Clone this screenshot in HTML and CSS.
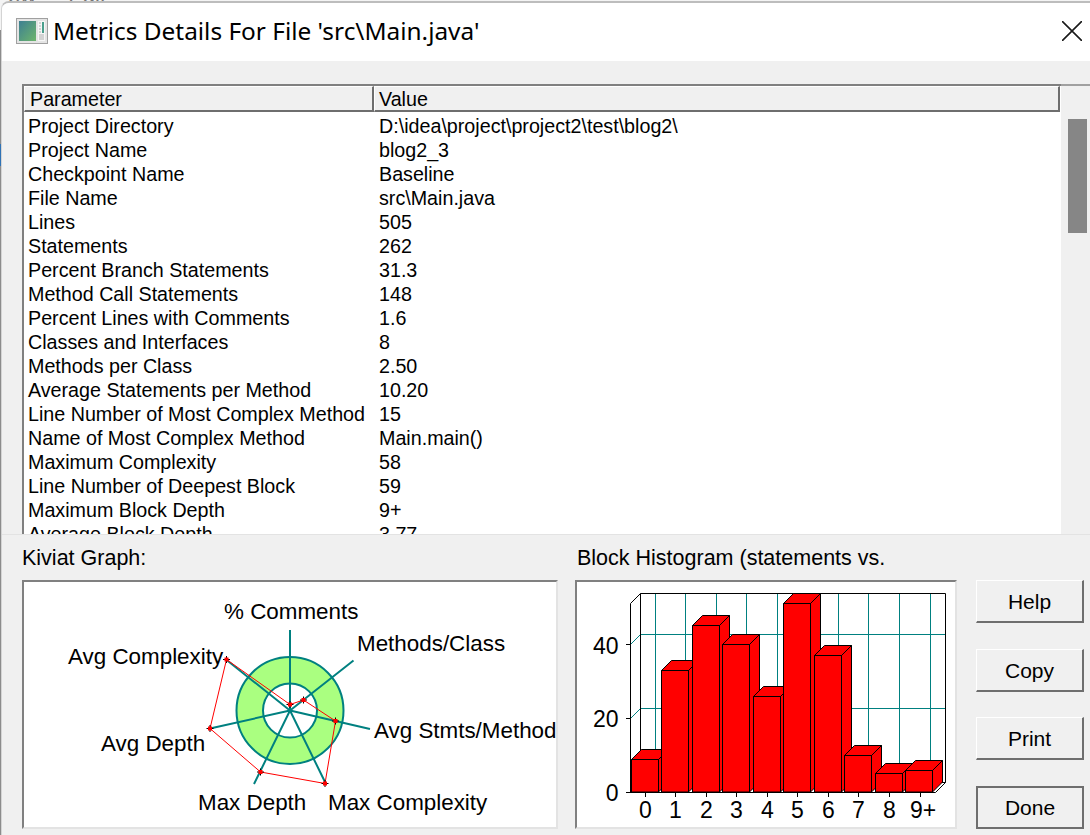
FILE: index.html
```html
<!DOCTYPE html>
<html lang="en">

<head>
    <meta charset="UTF-8">
    <title>Metrics Details</title>
    <link rel="stylesheet" href="styles.css">
</head>

<body>

    <div class="behind"><span>ew</span><span>Edit</span></div>
    <div class="behind-edge"><div class="behind-accent"></div></div>

    <div class="window">

        <!-- Title bar -->
        <div class="titlebar">
            <svg class="app-icon" width="32" height="26" viewBox="0 0 32 26">
                <defs>
                    <linearGradient id="panel" x1="0" y1="0" x2="1" y2="1">
                        <stop offset="0" stop-color="#3d7f92"/>
                        <stop offset="1" stop-color="#6db56c"/>
                    </linearGradient>
                </defs>
                <rect x="0.5" y="0.5" width="31" height="25" fill="#e4e4e4" stroke="#a0a0a0"/>
                <rect x="3" y="3" width="17" height="20" fill="url(#panel)"/>
                <rect x="22" y="3" width="7" height="20" fill="#f6f6f6"/>
                <rect x="26" y="4" width="2" height="11" fill="#4a9f8c"/>
                <path d="M23 5h2M23 8h2M23 11h2M23 14h2M23 17h5M23 19h5M23 21h5" stroke="#b0b0b0"/>
            </svg>
            <div class="title">Metrics Details For File 'src\Main.java'</div>
            <svg class="close" width="20" height="20" viewBox="0 0 20 20">
                <path d="M0 0L20 20M20 0L0 20" stroke="#1a1a1a" stroke-width="1.6" fill="none"/>
            </svg>
        </div>

        <!-- Parameter list -->
        <div class="details">
            <div class="list">
                <div class="list-header">
                    <div class="head-cell head-param">Parameter</div>
                    <div class="head-cell head-value">Value</div>
                </div>
                <div class="rows">
                    <div class="row"><span class="param">Project Directory</span><span>D:\idea\project\project2\test\blog2\</span></div>
                    <div class="row"><span class="param">Project Name</span><span>blog2_3</span></div>
                    <div class="row"><span class="param">Checkpoint Name</span><span>Baseline</span></div>
                    <div class="row"><span class="param">File Name</span><span>src\Main.java</span></div>
                    <div class="row"><span class="param">Lines</span><span>505</span></div>
                    <div class="row"><span class="param">Statements</span><span>262</span></div>
                    <div class="row"><span class="param">Percent Branch Statements</span><span>31.3</span></div>
                    <div class="row"><span class="param">Method Call Statements</span><span>148</span></div>
                    <div class="row"><span class="param">Percent Lines with Comments</span><span>1.6</span></div>
                    <div class="row"><span class="param">Classes and Interfaces</span><span>8</span></div>
                    <div class="row"><span class="param">Methods per Class</span><span>2.50</span></div>
                    <div class="row"><span class="param">Average Statements per Method</span><span>10.20</span></div>
                    <div class="row"><span class="param">Line Number of Most Complex Method</span><span>15</span></div>
                    <div class="row"><span class="param">Name of Most Complex Method</span><span>Main.main()</span></div>
                    <div class="row"><span class="param">Maximum Complexity</span><span>58</span></div>
                    <div class="row"><span class="param">Line Number of Deepest Block</span><span>59</span></div>
                    <div class="row"><span class="param">Maximum Block Depth</span><span>9+</span></div>
                    <div class="row"><span class="param">Average Block Depth</span><span>3.77</span></div>
                </div>
            </div>
            <div class="scrollbar">
                <div class="thumb"></div>
            </div>
        </div>

        <!-- Graphs and buttons -->
        <div class="lower">
            <div class="kiviat-col">
                <div class="graph-label">Kiviat Graph:</div>
                <div class="graph-box">
                    <svg class="graph" viewBox="24 582 532 245">
                        <circle cx="290" cy="710.5" r="53.5" fill="#aaff80" stroke="#008080" stroke-width="2"/>
                        <circle cx="290" cy="710.5" r="27" fill="#fff" stroke="#008080" stroke-width="2"/>
                        <path class="spoke" d="M290 710.5V630M290 710.5L353.5 660.5M290 710.5L370 729M290 710.5L326 784M290 710.5L254 784M290 710.5L210 728.5M290 710.5L226 659.5"/>
                        <polygon class="outline" points="290,704.5 303.5,700 335.5,721 325,783.5 260.5,772 210,728.5 226.5,659.5"/>
                        <path class="marks" d="M286.5 704.5h7M290 701v7M300 700h7M303.5 696.5v7M332 721h7M335.5 717.5v7M321.5 783.5h7M325 780v7M257 772h7M260.5 768.5v7M206.5 728.5h7M210 725v7M223 659.5h7M226.5 656v7"/>
                        <path class="marks-red" d="M290 704.5h.01M303.5 700h.01M335.5 721h.01M325 783.5h.01M260.5 772h.01M210 728.5h.01M226.5 659.5h.01"/>
                        <text x="224" y="619">% Comments</text>
                        <text x="357" y="651">Methods/Class</text>
                        <text x="374" y="738">Avg Stmts/Method</text>
                        <text x="328" y="810">Max Complexity</text>
                        <text x="198" y="810">Max Depth</text>
                        <text x="101" y="751">Avg Depth</text>
                        <text x="68" y="664">Avg Complexity</text>
                    </svg>
                </div>
            </div>

            <div class="hist-col">
                <div class="graph-label hist-label">Block Histogram (statements vs.</div>
                <div class="graph-box">
                    <svg class="graph" viewBox="577 582 378 245">
                        <clipPath id="plot"><rect x="577" y="593" width="378" height="234"/></clipPath>

                        <!-- back wall grid -->
                        <path class="grid" d="M655.5 593V782M685.5 593V782M716.5 593V782M746.5 593V782M777.5 593V782M807.5 593V782M838.5 593V782M868.5 593V782M899.5 593V782M930.5 593V782"/>
                        <path class="grid" d="M630.5 644.5L640.5 634.5H945.5M630.5 718.5L640.5 708.5H945.5"/>
                        <path class="frame" d="M630.5 792V603.5L640.5 593.5H945.5V782.5L935.5 792.5H626M640.5 593.5V782.5H945.5"/>
                        <path class="frame" d="M626 644.5H630.5M626 718.5H630.5M645.5 792V797M675.5 792V797M706.5 792V797M736.5 792V797M767.5 792V797M797.5 792V797M828.5 792V797M858.5 792V797M889.5 792V797M920.5 792V797"/>

                        <!-- bars -->
                        <g class="bars" clip-path="url(#plot)">
                            <path d="M631.5 759.5h27v32.5h-27zM631.5 759.5l10 -10h27l-10 10zM658.5 759.5l10 -10v32.5l-10 10z"/>
                            <path d="M661.5 670.5h27v121.5h-27zM661.5 670.5l10 -10h27l-10 10zM688.5 670.5l10 -10v121.5l-10 10z"/>
                            <path d="M692.5 625.5h27v166.5h-27zM692.5 625.5l10 -10h27l-10 10zM719.5 625.5l10 -10v166.5l-10 10z"/>
                            <path d="M722.5 644.5h27v147.5h-27zM722.5 644.5l10 -10h27l-10 10zM749.5 644.5l10 -10v147.5l-10 10z"/>
                            <path d="M753.5 696.5h27v95.5h-27zM753.5 696.5l10 -10h27l-10 10zM780.5 696.5l10 -10v95.5l-10 10z"/>
                            <path d="M783.5 603.5h27v188.5h-27zM783.5 603.5l10 -10h27l-10 10zM810.5 603.5l10 -10v188.5l-10 10z"/>
                            <path d="M814.5 655.5h27v136.5h-27zM814.5 655.5l10 -10h27l-10 10zM841.5 655.5l10 -10v136.5l-10 10z"/>
                            <path d="M844.5 755.5h27v36.5h-27zM844.5 755.5l10 -10h27l-10 10zM871.5 755.5l10 -10v36.5l-10 10z"/>
                            <path d="M875.5 773.5h27v18.5h-27zM875.5 773.5l10 -10h27l-10 10zM902.5 773.5l10 -10v18.5l-10 10z"/>
                            <path d="M905.5 770.5h27v21.5h-27zM905.5 770.5l10 -10h27l-10 10zM932.5 770.5l10 -10v21.5l-10 10z"/>
                        </g>

                        <!-- axis labels -->
                        <text class="ytick" x="618.5" y="653.5">40</text>
                        <text class="ytick" x="618.5" y="727">20</text>
                        <text class="ytick" x="618.5" y="801">0</text>
                        <text class="xtick" x="645.5" y="818">0</text>
                        <text class="xtick" x="675.5" y="818">1</text>
                        <text class="xtick" x="706.5" y="818">2</text>
                        <text class="xtick" x="736.5" y="818">3</text>
                        <text class="xtick" x="767.5" y="818">4</text>
                        <text class="xtick" x="797.5" y="818">5</text>
                        <text class="xtick" x="828.5" y="818">6</text>
                        <text class="xtick" x="858.5" y="818">7</text>
                        <text class="xtick" x="889.5" y="818">8</text>
                        <text class="xtick" x="923" y="818">9+</text>
                    </svg>
                </div>
            </div>

            <div class="buttons">
                <button class="btn">Help</button>
                <button class="btn">Copy</button>
                <button class="btn">Print</button>
                <button class="btn btn-default">Done</button>
            </div>
        </div>
    </div>

</body>

</html>
```

FILE: styles.css
```css
* {
    margin: 0;
    padding: 0;
    box-sizing: border-box;
}

html,
body {
    height: 835px;
    overflow: hidden;
}

body {
    position: relative;
    font-family: "Liberation Sans", Arial, sans-serif;
    font-size: 19.7px;
    color: #000;
    background-color: #f4f4f4;
}

/* bits of the window underneath, only their edges show */
.behind {
    position: absolute;
    top: -17px;
    left: 8px;
    display: flex;
    gap: 32px;
    font-size: 22px;
    color: #777;
}

.behind-edge {
    position: absolute;
    top: 30px;
    left: 0;
    width: 1px;
    bottom: 0;
    background-color: #8c8c8c;
}

.behind-accent {
    height: 22px;
    margin-top: 114px;
    background-color: #2f72b5;
}

.window {
    position: relative;
    width: 1089px;
    height: 834px;
    margin: 1px 0 0 1px;
    border-top: 2px solid #bdbdbd;
    border-left: 1px solid #d4d4d4;
    border-top-left-radius: 8px;
    background-color: #f0f0f0;
    overflow: hidden;
}

/* Title bar */
.titlebar {
    display: flex;
    align-items: center;
    height: 58px;
    padding: 0 8px 3px 14px;
    background-color: #fff;
}

.app-icon {
    flex: none;
    margin-right: 5px;
}

.title {
    flex: 1;
    font-size: 24.4px;
    font-family: "Noto Sans", "Liberation Sans", sans-serif;
    white-space: nowrap;
}

.close {
    flex: none;
}

/* Parameter list */
.details {
    display: flex;
    height: 450px;
    margin-top: 23px;
    padding-left: 20px;
}

.list {
    width: 1039px;
    height: 100%;
    background-color: #fff;
    border-top: 2px solid #808080;
    border-left: 2px solid #808080;
    overflow: hidden;
}

.list-header {
    display: flex;
    height: 26px;
    margin-right: 1px;
    background-color: #f0f0f0;
}

.head-cell {
    height: 100%;
    line-height: 24px;
    padding-left: 5px;
    border-right: 2px solid #6e6e6e;
    border-bottom: 2px solid #6e6e6e;
    border-top: 1px solid #fff;
    border-left: 1px solid #fff;
}

.head-param {
    width: 350px;
}

.head-value {
    flex: 1;
    padding-left: 4px;
}

.rows {
    padding-top: 2px;
}

.row {
    display: flex;
    height: 24px;
    line-height: 24px;
    padding-left: 4px;
    white-space: nowrap;
}

.param {
    width: 351px;
}

.scrollbar {
    flex: 1;
    padding: 33px 3px 0 7px;
    border-top: 2px solid #a0a0a0;
}

.thumb {
    height: 114px;
    background-color: #868686;
}

/* Graphs and buttons */
.lower {
    display: flex;
    padding: 0 0 0 20px;
    border-top: 1px solid #e3e3e3;
}

.kiviat-col {
    width: 536px;
    margin-right: 17px;
}

.hist-col {
    width: 382px;
    margin-right: 19px;
}

.graph-label {
    height: 45px;
    padding-top: 11px;
    line-height: 24px;
    font-size: 21.5px;
}

.hist-label {
    padding-left: 2px;
    white-space: nowrap;
}

.graph-box {
    height: 249px;
    background-color: #fff;
    border-top: 2px solid #808080;
    border-left: 2px solid #808080;
    border-right: 2px solid #e3e3e3;
    border-bottom: 2px solid #e3e3e3;
}

.graph {
    display: block;
    width: 100%;
    height: 100%;
}

.graph text {
    font-family: "Liberation Sans", Arial, sans-serif;
    font-size: 22.4px;
    fill: #000;
}

.spoke {
    fill: none;
    stroke: #008080;
    stroke-width: 2;
}

.outline {
    fill: none;
    stroke: #f00;
    stroke-width: 1;
}

.marks {
    fill: none;
    stroke: #000;
    stroke-width: 1;
}

.marks-red {
    fill: none;
    stroke: #f00;
    stroke-width: 4;
    stroke-linecap: square;
}

.grid {
    fill: none;
    stroke: #008080;
    stroke-width: 1;
}

.frame {
    fill: none;
    stroke: #000;
    stroke-width: 1;
}

.bars path {
    fill: #f00;
    stroke: #000;
    stroke-width: 1;
}

.graph .ytick {
    font-size: 23px;
    text-anchor: end;
}

.graph .xtick {
    font-size: 23px;
    text-anchor: middle;
}

.buttons {
    display: flex;
    flex-direction: column;
    justify-content: space-between;
    width: 108px;
    height: 249px;
    margin-top: 45px;
}

.btn {
    height: 43px;
    padding-top: 2px;
    font-family: "Liberation Sans", Arial, sans-serif;
    font-size: 21px;
    color: #000;
    background-color: #f0f0f0;
    border-top: 1px solid #fff;
    border-left: 1px solid #fff;
    border-right: 2px solid #6e6e6e;
    border-bottom: 2px solid #6e6e6e;
}

.btn-default {
    border: 2px solid #6e6e6e;
}
```
